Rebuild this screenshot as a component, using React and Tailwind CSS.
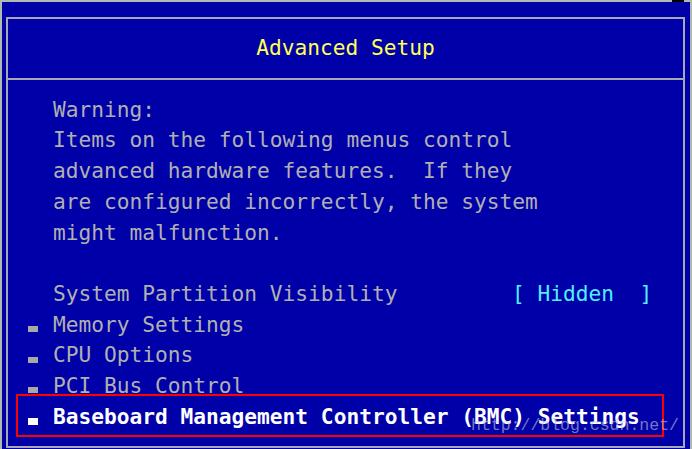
import React from "react";

const warn = [
  "Warning:",
  "Items on the following menus control",
  "advanced hardware features.  If they",
  "are configured incorrectly, the system",
  "might malfunction.",
];

function Row({ bullet, selected, children }) {
  return (
    <div className="flex h-[30.7px]">
      <div className="w-[25.5px] shrink-0">
        {bullet && (
          <div
            className={
              selected
                ? "mt-[16px] h-[7px] w-[10px] bg-white"
                : "mt-[16.5px] h-[6px] w-[10px] bg-[#a8a8a8]"
            }
          />
        )}
      </div>
      <div className="whitespace-pre">{children}</div>
    </div>
  );
}

export default function App() {
  return (
    <div className="w-[692px] h-[449px] overflow-hidden bg-[#b2b8b2] flex flex-col font-['DejaVu_Sans_Mono',monospace] text-[21.2px] leading-[30.7px] text-[#b0b0b0]">
      <div className="h-[2px] flex shrink-0">
        <div className="flex-1" />
        <div className="w-[12px] bg-black" />
        <div className="w-[8px]" />
      </div>
      <div className="flex-1 ml-[2px] mr-[2px] bg-[#0000a8] pl-[4px] pt-[15px]">
        <div className="relative w-[679px] h-[431px] border-2 border-[#a8a8b4] flex flex-col">
          <div className="h-[59px] flex items-center justify-center text-[#ffff55] shrink-0">
            Advanced Setup
          </div>
          <div className="h-[2px] bg-[#a8a8b4] shrink-0" />
          <div className="pl-[19.5px] pt-[14.8px]">
            {warn.map((t) => (
              <Row key={t}>{t}</Row>
            ))}
            <Row> </Row>
            <Row>
              <span className="inline-block w-[459px]">System Partition Visibility</span>
              <span className="text-[#50eeff]">[ Hidden  ]</span>
            </Row>
            <Row bullet>Memory Settings</Row>
            <Row bullet>CPU Options</Row>
            <Row bullet>PCI Bus Control</Row>
            <div className="relative">
              <div className="absolute left-[-11.5px] top-[-8px] w-[648px] h-[43px] border-2 border-[#ff0000]" />
              <div className="text-white font-bold">
                <Row bullet selected>
                  Baseboard Management Controller (BMC) Settings
                </Row>
              </div>
            </div>
          </div>
          <div className="absolute left-[463px] top-[397px] font-['Liberation_Mono',monospace] text-[16.5px] leading-[20px] text-[#c8c8d8]/60">
            http://blog.csdn.net/
          </div>
        </div>
      </div>
    </div>
  );
}
